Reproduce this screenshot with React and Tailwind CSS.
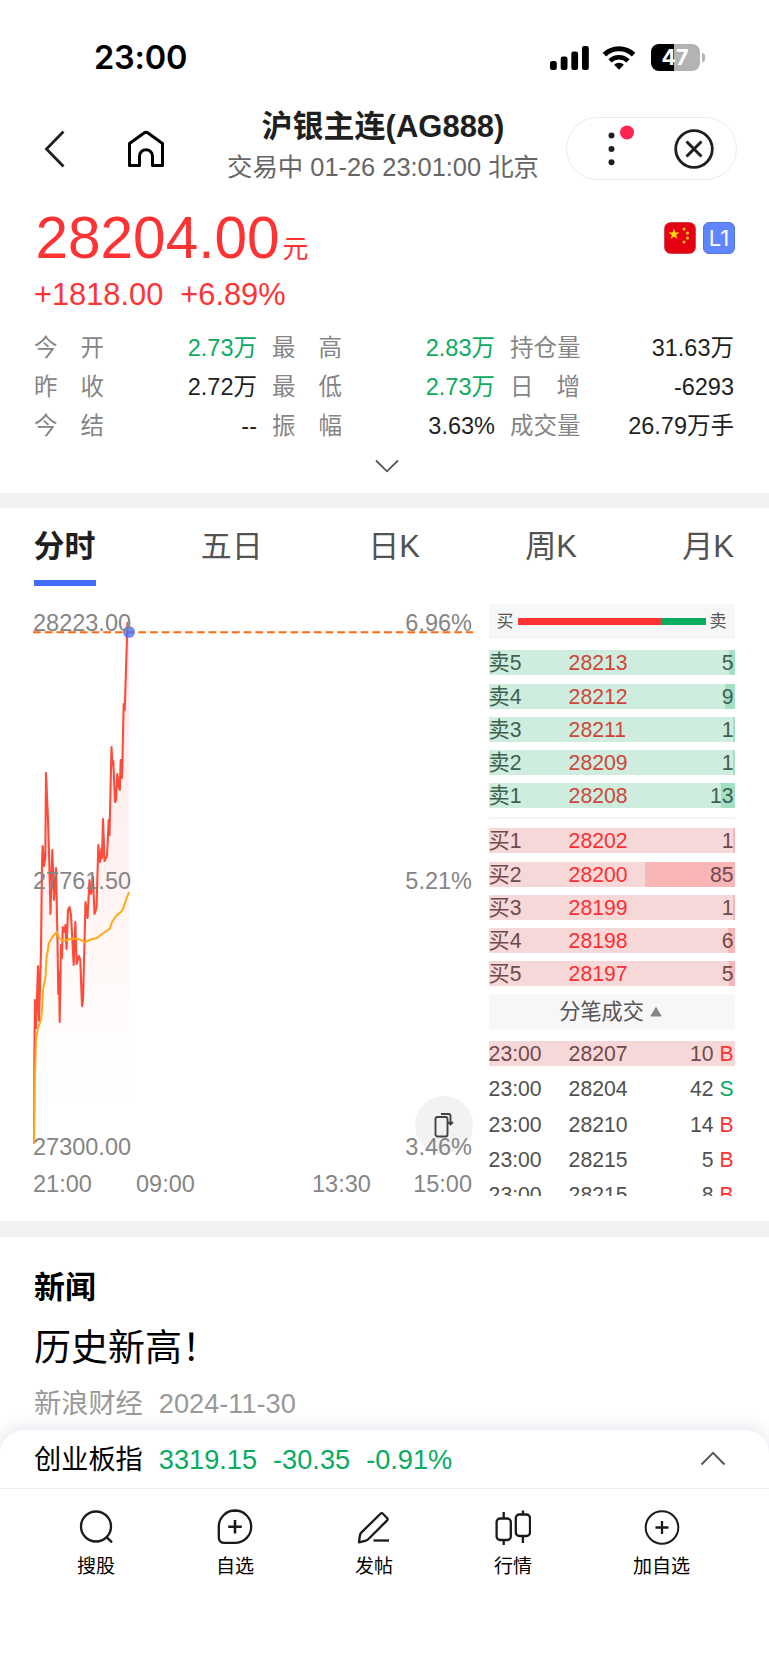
const stats = [
  ["今开", "2.73万", true],
  ["最高", "2.83万", true],
  ["持仓量", "31.63万", false],
  ["昨收", "2.72万", false],
  ["最低", "2.73万", true],
  ["日增", "-6293", false],
  ["今结", "--", false],
  ["振幅", "3.63%", false],
  ["成交量", "26.79万手", false],
];

const tabs = ["分时", "五日", "日K", "周K", "月K"];

const sells = [
  ["卖5", 28213, 5],
  ["卖4", 28212, 9],
  ["卖3", 28211, 1],
  ["卖2", 28209, 1],
  ["卖1", 28208, 13],
];

const buys = [
  ["买1", 28202, 1],
  ["买2", 28200, 85],
  ["买3", 28199, 1],
  ["买4", 28198, 6],
  ["买5", 28197, 5],
];

const trades = [
  ["23:00", 28207, 10, "B"],
  ["23:00", 28204, 42, "S"],
  ["23:00", 28210, 14, "B"],
  ["23:00", 28215, 5, "B"],
  ["23:00", 28215, 8, "B"],
];

const pricePoints =
  "34,1143 34.3,1060 35,1000 36,1028 38,966 39,1021 41,950 42,862 42.7,846 44,866 45.3,858 46,773 48,820 49.5,870 50.5,914 52.3,850 54,900 56,868 57.3,930 58.3,994 59,972 59.7,1022 61,945 62,958 62.7,927 64,932 65.5,925 66.5,949 68,910 69.5,907 71,915 73.7,965 75.3,922 76.7,964 79,956 80.3,960 82,1006 83,1000 84.7,935 85.5,902 87.5,918 89.5,880 91,894 93,877 94.5,914 96.5,908 98.3,845 100,862 101.5,848 102,858 103,819 104.5,861 107,856 108.7,820 109.5,835 111.5,747 112.5,765 113.3,761 115,802 116,800 117.3,774 119,787 119.8,790 120.7,760 122,778 123.7,704 124.7,710 127.5,622";

const avgPoints =
  "34,1144 34.5,1090 36,1040 38,1028 41,1020 42,1010 43,990 45.5,977 46.5,958 49,943 53,936 57,932 59,938 62,940.5 66,940 73,938.5 80,939.5 85,942 91,939.5 97,938 102,934 110,928.5 112,922 116,916 121,912 123,909 125,903 129,892";

function StatusBar() {
  return (
    <div className="flex h-[100px] items-start pl-[94px] pr-[64px] pt-[41px]">
      <span className="font-['Inter'] text-[32.5px] font-semibold leading-[33px] tracking-[-0.2px] text-black">23:00</span>
      <div className="ml-auto flex items-center pt-[3px]">
        <svg width="39" height="26" viewBox="0 0 39 26">
          <rect x="0" y="16" width="6.8" height="9" rx="2.2" />
          <rect x="10.7" y="11.5" width="6.8" height="13.5" rx="2.2" />
          <rect x="21.3" y="6.5" width="6.8" height="18.5" rx="2.2" />
          <rect x="32" y="1" width="6.8" height="24" rx="2.2" />
        </svg>
        <svg width="34" height="26" viewBox="0 0 34 26" className="ml-[13px]">
          <path d="M2.4 9.6a21 21 0 0 1 29.2 0" fill="none" stroke="#000" strokeWidth="5" />
          <path d="M8 15.8a13 13 0 0 1 18 0" fill="none" stroke="#000" strokeWidth="4.6" />
          <path d="M17 24.8l-4.9-5a7 7 0 0 1 9.8 0z" />
        </svg>
        <div className="ml-[15px] flex h-[27px] w-[49px] items-center justify-center rounded-[8px] bg-[linear-gradient(90deg,#000_47%,#b3b3b3_47%)] pr-[1px] font-['Inter'] text-[21.5px] font-bold leading-none text-white">
          47
        </div>
        <div className="ml-[2px] h-[9px] w-[3px] rounded-r-full bg-[#b3b3b3]" />
      </div>
    </div>
  );
}

function Header() {
  return (
    <div className="flex h-[97px] items-center pl-[44px] pr-[32px]">
      <svg width="21" height="38" viewBox="0 0 21 38" fill="none" stroke="#1f1f1f" strokeWidth="2.8">
        <path d="M19.5 1.5 2.5 19l17 17.5" />
      </svg>
      <svg width="38" height="38" viewBox="0 0 38 38" fill="none" stroke="#000" strokeWidth="3" strokeLinejoin="round" className="ml-[62px]">
        <path d="M2.5 13.5 17.4 2.8a3 3 0 0 1 3.3 0L35.5 13.5v22h-10v-9.3a6.5 6.5 0 0 0-13 0v9.3h-10z" />
      </svg>
      <div className="ml-[62px] w-[312px] whitespace-nowrap pb-[4px] text-center">
        <h1 className="text-[31px] font-bold leading-[40px] text-[#1f1f1f]">沪银主连(AG888)</h1>
        <p className="text-[25.4px] leading-[40px] text-[#666]">交易中 01-26 23:01:00 北京</p>
      </div>
      <div className="ml-auto flex h-[63px] w-[171px] items-center rounded-full border border-[#ebebeb] pl-[40px]">
        <svg width="120" height="44" viewBox="0 0 120 44" fill="#1f1f1f" className="overflow-visible">
          <circle cx="4.5" cy="8.5" r="3" />
          <circle cx="4.5" cy="22" r="3" />
          <circle cx="4.5" cy="35.3" r="3" />
          <circle cx="20" cy="5.5" r="7" fill="#fe2550" />
          <circle cx="87" cy="22" r="18.3" fill="none" stroke="#1f1f1f" strokeWidth="2.8" />
          <path d="m79.5 14.5 15 15m0-15-15 15" stroke="#1f1f1f" strokeWidth="3" />
        </svg>
      </div>
    </div>
  );
}

function Quote() {
  return (
    <section className="px-[34px] pt-[3px]">
      <div className="flex h-[75px] items-center text-[#ff3333]">
        <span className="ml-[1.5px] text-[58.5px] leading-[75px]">28204.00</span>
        <span className="ml-[3px] pt-[22px] text-[26px] leading-[30px]">元</span>
        <svg width="32" height="32" viewBox="0 0 32 32" className="ml-auto">
          <rect x="0.8" y="0.8" width="30.4" height="30.4" rx="5.5" fill="#e60012" stroke="#c9101c" />
          <path d="m10 6.5 1.3 4h4.2l-3.4 2.5 1.3 4-3.4-2.4L6.600 17l1.300-4-3.400-2.500h4.200z" fill="#ffe100" />
          <circle cx="20" cy="7" r="1.5" fill="#ffd800" />
          <circle cx="23.5" cy="11" r="1.5" fill="#ffd800" />
          <circle cx="23.5" cy="16" r="1.5" fill="#ffd800" />
          <circle cx="20" cy="20" r="1.5" fill="#ffd800" />
        </svg>
        <span className="ml-[7px] flex size-[32px] items-center justify-center rounded-[6px] border border-[#5477e0] bg-[#5f86ff] font-['Inter'] text-[22px] leading-none text-white">
          L1
        </span>
      </div>
      <div className="mt-[1px] flex gap-[17px] text-[30.8px] leading-[38px] text-[#ff3333]">
        <span>+1818.00</span>
        <span>+6.89%</span>
      </div>
      <div className="mt-[15px] grid grid-cols-[223px_223px_224px] gap-x-[15px] text-[23.5px] leading-[39px]">
        {stats.map(([label, value, green]) => (
          <div key={label} className="flex justify-between">
            <span className="flex w-[70px] justify-between text-[#858585]">
              {label.split("").map((ch) => (
                <span key={ch}>{ch}</span>
              ))}
            </span>
            <span className={green ? "text-[#0aaa5f]" : "text-[#1f1f1f]"}>{value}</span>
          </div>
        ))}
      </div>
      <div className="flex h-[47px] justify-center pl-[4px] pt-[13px]">
        <svg width="24" height="14" viewBox="0 0 24 14" fill="none" stroke="#555" strokeWidth="1.8">
          <path d="m1 1.5 11 10.8L23 1.5" />
        </svg>
      </div>
    </section>
  );
}

function Chart() {
  return (
    <div className="w-[440px]">
      <div className="relative h-[568px]">
        <svg width="440" height="568" viewBox="33 604 440 568" fill="none" className="block">
          <defs>
            <linearGradient id="fade" x1="0" y1="622" x2="0" y2="1118" gradientUnits="userSpaceOnUse">
              <stop offset="0" stopColor="#ff3c32" stopOpacity="0.1" />
              <stop offset="0.5" stopColor="#ff3c32" stopOpacity="0.065" />
              <stop offset="0.85" stopColor="#ff3c32" stopOpacity="0.01" />
              <stop offset="1" stopColor="#ff3c32" stopOpacity="0" />
            </linearGradient>
          </defs>
          <polygon points={`${pricePoints} 129,622 129,1118 34,1118`} fill="url(#fade)" />
          <path d="M33 632.3H473" stroke="#ff6a0d" strokeWidth="2" strokeDasharray="7.8 3.9" />
          <polyline points={pricePoints} stroke="#ff4b3a" strokeWidth="2.1" strokeLinejoin="round" />
          <polyline points={avgPoints} stroke="#ffa914" strokeWidth="2" strokeLinejoin="round" />
          <circle cx="129" cy="632" r="6" fill="#4d72f7" fillOpacity="0.8" />
        </svg>
        <div className="absolute bottom-[18px] right-[0.5px] flex size-[58px] items-center justify-center rounded-full bg-[#f2f2f2]">
          <svg width="20" height="26" viewBox="0 0 20 26" fill="none" stroke="#444" strokeWidth="1.9">
            <rect x="1.5" y="5" width="12" height="19.5" rx="2" />
            <path d="M7 2h7.5q2 0 2 2v8m-2.500-2 2.500 2.500 2.500-2.500" />
          </svg>
        </div>
        <span className="absolute left-0 top-[7px]">28223.00</span>
        <span className="absolute right-[1px] top-[7px]">6.96%</span>
        <span className="absolute left-0 top-[265px]">27761.50</span>
        <span className="absolute right-[1px] top-[265px]">5.21%</span>
        <span className="absolute bottom-[13px] left-0">27300.00</span>
        <span className="absolute bottom-[13px] right-[1px]">3.46%</span>
      </div>
      <div className="flex pr-px">
        <span className="w-[103px]">21:00</span>
        <span className="w-[176px]">09:00</span>
        <span>13:30</span>
        <span className="ml-auto">15:00</span>
      </div>
    </div>
  );
}

function Level({ row, side }) {
  const [label, price, qty] = row;
  const sell = side === "sell";
  return (
    <div className={`relative flex h-[25px] pr-px leading-[25px] ${sell ? "bg-[#ceeddf] text-[#3d6151]" : "bg-[#f7d8d8] text-[#71494b]"}`}>
      <div
        className={`absolute inset-y-0 right-0 ${sell ? "bg-[#a4e0c4]" : "bg-[#f9b6b7]"}`}
        style={{ width: Math.max(1.5, qty * 1.06) }}
      />
      <span className="relative w-[80px]">{label}</span>
      <span className={`relative ${sell ? "text-[#cd4738]" : "text-[#fb2f31]"}`}>{price}</span>
      <span className="relative ml-auto">{qty}</span>
    </div>
  );
}

function OrderBook() {
  return (
    <div className="h-[592px] w-[246px] overflow-hidden text-[21.2px]">
      <div className="flex h-[35px] items-center bg-[#f7f7f7] px-[8px] text-[17px] text-[#555]">
        <span>买</span>
        <div className="mx-[4px] flex h-[7px] flex-1">
          <div className="w-[77%] bg-[#ff3333]" />
          <div className="flex-1 bg-[#0aaa5f]" />
        </div>
        <span>卖</span>
      </div>
      <div className="mt-[11.4px] flex flex-col gap-[8.25px]">
        {sells.map((row) => (
          <Level key={row[0]} row={row} side="sell" />
        ))}
      </div>
      <div className="mt-[8.6px] h-[2px] bg-[#f3f3f3]" />
      <div className="mt-[9.3px] flex flex-col gap-[8.25px]">
        {buys.map((row) => (
          <Level key={row[0]} row={row} side="buy" />
        ))}
      </div>
      <div className="mt-[8px] flex h-[35px] items-center justify-center bg-[#f7f7f7] pr-[2px] text-[#555]">
        分笔成交
        <svg width="12" height="11" viewBox="0 0 12 11" fill="#858585" className="ml-[6px]">
          <path d="M6 1.5 11 10H1z" stroke="#858585" strokeLinejoin="round" />
        </svg>
      </div>
      <div className="mt-[12px] flex flex-col gap-[10.2px] leading-[25px] text-[#505050]">
        {trades.map(([time, price, qty, dir], i) => (
          <div key={i} className={`flex h-[25px] shrink-0 pr-px ${i === 0 ? "bg-[#f7d8d8] text-[#71494b]" : ""}`}>
            <span className="w-[80px]">{time}</span>
            <span>{price}</span>
            <span className="ml-auto mr-[6px]">{qty}</span>
            <span className={dir === "B" ? "text-[#ff3333]" : "text-[#0aaa5f]"}>{dir}</span>
          </div>
        ))}
      </div>
    </div>
  );
}

const navItems = [
  {
    label: "搜股",
    icon: (
      <>
        <circle cx="17" cy="17.5" r="15" />
        <path d="m27 27.700 6 5.700" />
      </>
    ),
  },
  {
    label: "自选",
    icon: (
      <>
        <path d="M18 1.5a16.200 16.200 0 0 1 0 32.400H7.500q-5.700 0-5.700-5.700V17.700A16.200 16.200 0 0 1 18 1.500z" />
        <path d="M18 11v13.5M11.200 17.700h13.600" strokeWidth="2.6" />
      </>
    ),
  },
  {
    label: "发帖",
    icon: (
      <>
        <path d="M24.500 4.800q1.200-1.200 2.400 0l4.200 4.200q1.200 1.200 0 2.400L12.500 30q-1.500 1.500-3.500 1.900L3 33.300l.8-6.500q.3-2 1.700-3.400z" />
        <path d="M17.500 31.500H33" />
      </>
    ),
  },
  {
    label: "行情",
    icon: (
      <>
        <rect x="1.600" y="9.500" width="14.200" height="21.500" rx="3.500" />
        <rect x="20.800" y="5.500" width="14.200" height="21.500" rx="3.500" />
        <path d="M8.700 3v6.500M8.700 31v5M27.900 1.500v4M27.900 27v7" />
      </>
    ),
  },
  {
    label: "加自选",
    icon: (
      <>
        <circle cx="18" cy="18.5" r="16.300" strokeWidth="2" />
        <path d="M18 12v13M11.500 18.500h13" />
      </>
    ),
  },
];

export default function App() {
  return (
    <div className="h-[1665px] w-[769px] overflow-hidden bg-white font-['Liberation_Sans','Noto_Sans_CJK_SC',sans-serif]">
      <StatusBar />
      <Header />
      <Quote />
      <div className="h-[15px] bg-[#f1f1f1]" />

      <div className="flex justify-between pl-[33.5px] pr-[35px] pt-[23px]">
        {tabs.map((tab, i) => (
          <div
            key={tab}
            className={`h-[55px] text-[31px] leading-[32px] ${i === 0 ? "border-b-[6px] border-[#416bf8] font-bold text-[#1f1f1f]" : "text-[#525252]"}`}
          >
            {tab}
          </div>
        ))}
      </div>

      <section className="flex h-[635px] gap-[15.6px] pl-[33px] pt-[18px] text-[23.5px] leading-[24px] text-[#858585]">
        <Chart />
        <OrderBook />
      </section>
      <div className="h-[16px] bg-[#f1f1f1]" />

      <section className="h-[193px] px-[34px] pt-[31px]">
        <h2 className="text-[31px] font-bold leading-[40px] text-black">新闻</h2>
        <p className="mt-[16px] text-[37px] leading-[50px] text-black">历史新高！</p>
        <p className="mt-[10px] flex gap-[16px] text-[27.2px] leading-[40px] text-[#999]">
          <span>新浪财经</span>
          <span>2024-11-30</span>
        </p>
      </section>

      <div className="relative h-[235px] rounded-t-[24px] bg-white shadow-[0_-3px_16px_rgba(50,60,110,0.13)]">
        <div className="flex h-[59px] items-center gap-[16px] border-b border-[#eeeeee] pl-[34px] pr-[43px] pt-[2px] text-[27.2px] leading-[40px] text-[#0aaa5f]">
          <span className="text-black">创业板指</span>
          <span>3319.15</span>
          <span>-30.35</span>
          <span>-0.91%</span>
          <svg width="26" height="15" viewBox="0 0 26 15" fill="none" stroke="#555" strokeWidth="1.9" className="mb-[4px] ml-auto">
            <path d="M1.5 13.5 13 1.800l11.500 11.700" />
          </svg>
        </div>
        <nav className="flex justify-between pl-[77px] pr-[79px] pt-[20px]">
          {navItems.map(({ label, icon }) => (
            <div key={label} className="flex flex-col items-center">
              <svg width="37" height="38" viewBox="-1 0 37 38" fill="none" stroke="#1a1a1a" strokeWidth="2.3" strokeLinejoin="round">
                {icon}
              </svg>
              <span className="mt-[8px] text-[19px] leading-[24px] text-black">{label}</span>
            </div>
          ))}
        </nav>
      </div>
    </div>
  );
}
